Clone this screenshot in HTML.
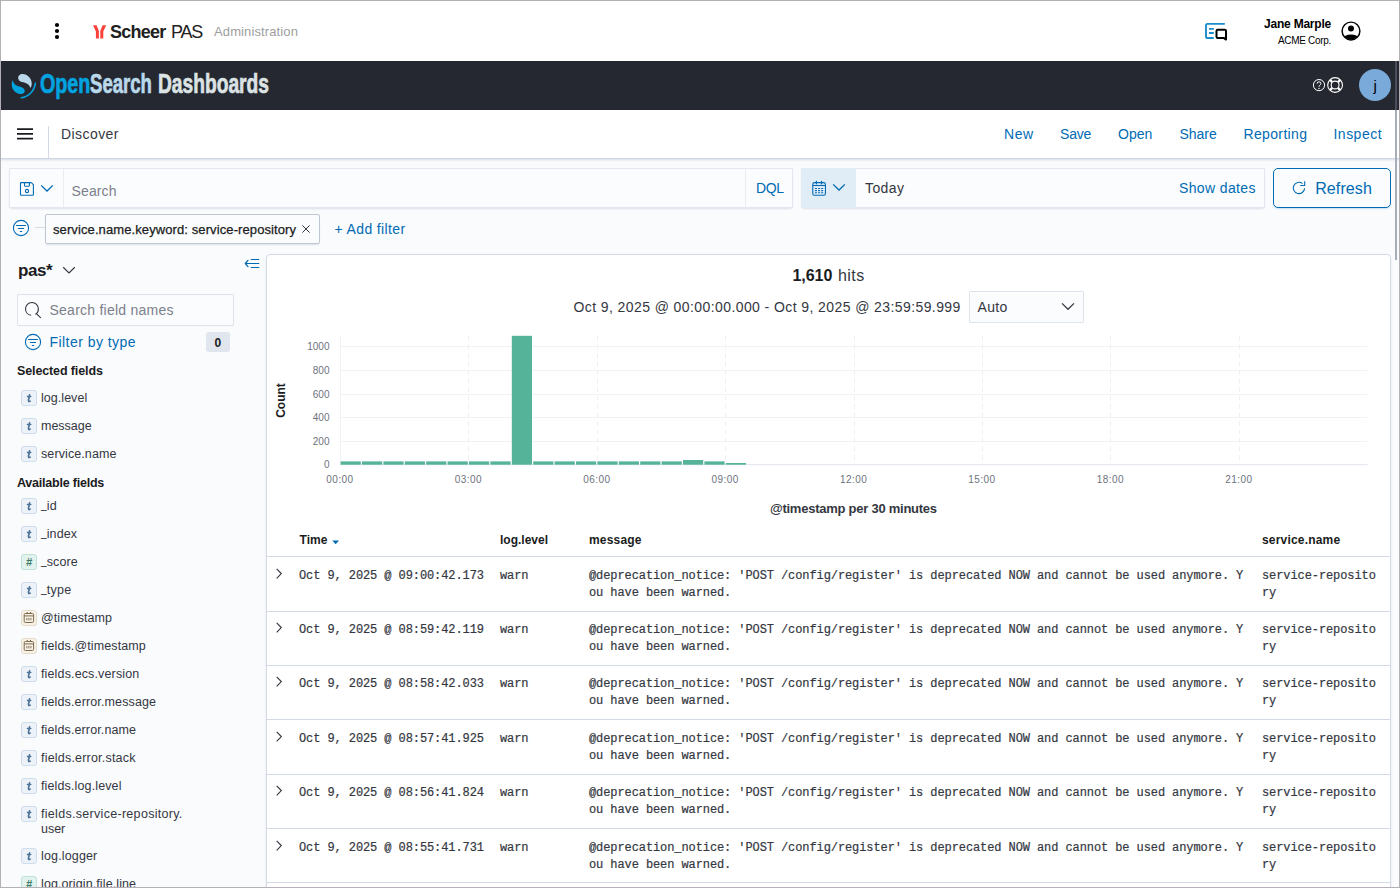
<!DOCTYPE html>
<html>
<head>
<meta charset="utf-8">
<title>Discover - OpenSearch Dashboards</title>
<style>
*{box-sizing:border-box;margin:0;padding:0}
html,body{width:1400px;height:888px;overflow:hidden;background:#fff}
body{position:relative;font-family:"Liberation Sans",sans-serif;color:#343741;font-size:14px}
.abs{position:absolute}
.t{position:absolute;white-space:nowrap;line-height:1}
.mono{font-family:"Liberation Mono",monospace}
.link{color:#006bb4}
#frame{position:absolute;left:0;top:0;width:1400px;height:888px;border:1px solid #b5b0b5;z-index:100;pointer-events:none}
/* top header */
#hdr{position:absolute;left:0;top:0;width:1400px;height:61px;background:#fff}
/* dark bar */
#osd{position:absolute;left:0;top:61px;width:1400px;height:49px;background:#252830}
/* nav */
#nav{position:absolute;left:0;top:110px;width:1400px;height:48px;background:#fff}
#bg{position:absolute;left:0;top:158px;width:1400px;height:730px;background:#fafbfd}
#navsh{position:absolute;left:0;top:158px;width:1400px;height:4px;background:linear-gradient(#d1d8e4 0,#d1d8e4 25%,#e2e6ee 25%,#e2e6ee 50%,#eff1f6 50%,#eff1f6 75%,#f6f8fb 75%,#f6f8fb 100%)}
</style>
</head>
<body>
<div id="hdr"></div>
<div id="osd"></div>
<div id="nav"></div>
<div id="bg"></div>
<div id="navsh"></div>

<!-- ===== top header ===== -->
<svg class="abs" style="left:53px;top:21px" width="8" height="20" viewBox="0 0 8 20"><circle cx="4" cy="4" r="2.1" fill="#000"/><circle cx="4" cy="10" r="2.1" fill="#000"/><circle cx="4" cy="16" r="2.1" fill="#000"/></svg>
<svg class="abs" style="left:93px;top:24.5px" width="14" height="14" viewBox="0 0 14 14"><path d="M0 0.3 L3.6 0.3 L5.9 6 L5.9 13.6 L2.9 13.6 L2.9 6.6 Z M13.2 0.3 L9.6 0.3 L7.3 6 L7.3 13.6 L10.3 13.6 L10.3 6.6 Z" fill="#f9423a"/></svg>
<span class="t" style="left:110px;top:23px;font-size:18px;font-weight:bold;color:#212121;letter-spacing:-0.77px">Scheer</span>
<span class="t" style="left:171px;top:23px;font-size:18px;color:#212121;letter-spacing:-1.16px">PAS</span>
<span class="t" style="left:214px;top:25px;font-size:13px;color:#9e9e9e;letter-spacing:0.12px">Administration</span>
<svg class="abs" style="left:1200px;top:18px" width="32" height="26" viewBox="1200 18 32 26"><path d="M1224.8 23.9 H1207.6 Q1206 23.9 1206 25.5 V36.4 Q1206 38 1207.6 38 H1213.8" fill="none" stroke="#1a8dcb" stroke-width="1.9"/><path d="M1209 28.9 H1213.8 M1209 33 H1213.8" stroke="#1a8dcb" stroke-width="1.8" fill="none"/><path d="M1217.7 29.8 H1224.8 Q1226 29.8 1226 31 V39.6 L1223.8 37.9 H1217.7 Q1216.5 37.9 1216.5 36.7 V31 Q1216.5 29.8 1217.7 29.8 Z" fill="#fff" stroke="#000" stroke-width="2" stroke-linejoin="round"/></svg>
<span class="t" style="right:69px;top:18px;font-size:12px;font-weight:bold;color:#000;letter-spacing:-0.22px">Jane Marple</span>
<span class="t" style="right:69px;top:36px;font-size:10px;color:#000;letter-spacing:-0.31px">ACME Corp.</span>
<svg class="abs" style="left:1340px;top:20px" width="22" height="22" viewBox="0 0 22 22"><defs><clipPath id="uc"><circle cx="11" cy="11" r="8.6"/></clipPath></defs><circle cx="11" cy="11" r="8.9" fill="#fff" stroke="#000" stroke-width="1.45"/><circle cx="11" cy="8.4" r="3" fill="#000"/><ellipse cx="11" cy="19" rx="7.8" ry="4.5" fill="#000" clip-path="url(#uc)"/></svg>

<!-- ===== OSD dark bar ===== -->
<svg class="abs" style="left:6px;top:68px" width="40" height="36" viewBox="6 68 40 36">
<path d="M18.2 78.6 C17.9 75.6 20.3 74 22.5 74.1 C27.6 74.3 31.6 78.6 31.7 83.2 C31.75 85.1 31.3 86.8 30.4 88.1 C29.6 85.4 28 83.8 25.4 83 C22.8 82.2 18.8 81.9 18.2 78.6 Z" fill="#b9d9eb"/>
<path d="M12.6 79.9 C11.1 83.5 11.4 87.6 13.8 90.6 C16 93.4 19.6 94.7 22.4 93.8 C24.3 93.2 25.1 91.5 24.6 89.9 C23.9 87.7 21 87 18.5 86.2 C15.5 85.2 13.3 83.5 12.6 79.9 Z" fill="#00a3e0"/>
<path d="M35.3 83.4 A16.4 16.4 0 0 1 21.3 97.8" fill="none" stroke="#00a3e0" stroke-width="1.6" stroke-linecap="round"/>
</svg>
<span class="t" style="left:40px;top:71.3px;font-size:27px;font-weight:bold;color:#00a3e0;-webkit-text-stroke:.7px #00a3e0;transform:scaleX(.730);transform-origin:0 0">Open</span>
<span class="t" style="left:90.4px;top:71.3px;font-size:27px;font-weight:bold;color:#b9d9eb;-webkit-text-stroke:.7px #b9d9eb;transform:scaleX(.688);transform-origin:0 0">Search</span>
<span class="t" style="left:158px;top:71.3px;font-size:27px;font-weight:bold;color:#dce3e4;-webkit-text-stroke:.7px #dce3e4;transform:scaleX(.711);transform-origin:0 0">Dashboards</span>
<svg class="abs" style="left:1311px;top:76px" width="34" height="18" viewBox="1311 76 34 18">
<circle cx="1319" cy="85.1" r="5.6" fill="none" stroke="#fff" stroke-width="1"/>
<path d="M1317.1 83.6 Q1317.1 81.8 1319 81.8 Q1320.9 81.8 1320.9 83.5 Q1320.9 84.6 1319.8 85.2 Q1319 85.7 1319 86.8" fill="none" stroke="#fff" stroke-width="1"/><circle cx="1319" cy="88.4" r=".7" fill="#fff"/>
<circle cx="1335.1" cy="85" r="7.4" fill="none" stroke="#fff" stroke-width="1.1"/>
<circle cx="1335.1" cy="85" r="3.9" fill="none" stroke="#fff" stroke-width="1.1"/>
<path d="M1332.2 82.1 L1330 79.9 M1338 82.1 L1340.2 79.9 M1332.2 87.9 L1330 90.1 M1338 87.9 L1340.2 90.1" stroke="#fff" stroke-width="2.3"/>
</svg>
<div class="abs" style="left:1359px;top:69px;width:32px;height:32px;border-radius:16px;background:#79aad9"></div>
<span class="t" style="left:1373.4px;top:78.3px;font-size:15px;color:#000">j</span>

<!-- ===== nav bar ===== -->
<svg class="abs" style="left:17px;top:128px" width="16" height="12" viewBox="0 0 16 12"><path d="M0 1.1 H16 M0 5.9 H16 M0 10.7 H16" stroke="#1a1c21" stroke-width="1.7"/></svg>
<div class="abs" style="left:48px;top:126px;width:1px;height:32px;background:#d3dae6"></div>
<span class="t" style="left:61px;top:127px;font-size:14px;color:#343741;letter-spacing:.43px">Discover</span>
<span class="t link" style="left:1004px;top:127px;font-size:14px;letter-spacing:.6px">New</span>
<span class="t link" style="left:1060px;top:127px;font-size:14px;letter-spacing:-.2px">Save</span>
<span class="t link" style="left:1118px;top:127px;font-size:14px;letter-spacing:0">Open</span>
<span class="t link" style="left:1179.5px;top:127px;font-size:14px;letter-spacing:-.04px">Share</span>
<span class="t link" style="left:1243.5px;top:127px;font-size:14px;letter-spacing:.35px">Reporting</span>
<span class="t link" style="left:1333.5px;top:127px;font-size:14px;letter-spacing:.48px">Inspect</span>

<!-- ===== query bar ===== -->
<div class="abs" style="left:9px;top:168px;width:784px;height:40px;background:#fbfcfd;border:1px solid #e3e7ef;box-shadow:0 1px 2px -1px rgba(152,162,179,.35),0 2px 3px -2px rgba(152,162,179,.3)"></div>
<div class="abs" style="left:63px;top:169px;width:1px;height:38px;background:#e9edf3"></div>
<div class="abs" style="left:745px;top:169px;width:1px;height:38px;background:#e9edf3"></div>
<svg class="abs" style="left:18px;top:180px" width="18" height="18" viewBox="18 180 18 18"><path d="M21.1 182.6 H30.9 Q31.3 182.6 31.6 182.9 L33.1 184.4 Q33.4 184.7 33.4 185.1 V194.7 Q33.4 195.3 32.8 195.3 H21.1 Q20.5 195.3 20.5 194.7 V183.2 Q20.5 182.6 21.1 182.6 Z" fill="none" stroke="#006bb4" stroke-width="1.1"/><path d="M24.5 182.7 V185.6 Q24.5 186.2 25.1 186.2 H28.8 Q29.4 186.2 29.4 185.6 V182.7" fill="none" stroke="#006bb4" stroke-width="1.1"/><circle cx="27" cy="191" r="1.65" fill="none" stroke="#006bb4" stroke-width="1.1"/></svg>
<svg class="abs" style="left:40px;top:184.4px" width="14" height="9" viewBox="0 0 14 9"><path d="M1.2 1.4 L7 7 L12.8 1.4" fill="none" stroke="#006bb4" stroke-width="1.3"/></svg>
<span class="t" style="left:71.5px;top:184px;font-size:14px;color:#7b808c;letter-spacing:.13px">Search</span>
<span class="t link" style="left:756px;top:181px;font-size:14px;letter-spacing:-.4px">DQL</span>

<div class="abs" style="left:801px;top:168px;width:464px;height:40px;background:#fbfcfd;border:1px solid #e3e7ef;box-shadow:0 1px 2px -1px rgba(152,162,179,.35),0 2px 3px -2px rgba(152,162,179,.3)"></div>
<div class="abs" style="left:801px;top:168px;width:55px;height:40px;background:#e0ecf6"></div>
<svg class="abs" style="left:810px;top:178px" width="18" height="20" viewBox="810 178 18 20"><rect x="812.75" y="182.6" width="12.7" height="12.7" rx="1.9" fill="none" stroke="#006bb4" stroke-width="1.1"/><path d="M812.8 185.5 H825.4" stroke="#006bb4" stroke-width="1.1"/><path d="M816.4 181.4 V183.8 M821.5 181.4 V183.8" stroke="#006bb4" stroke-width="1.3" stroke-linecap="round"/><rect x="814.9" y="188" width="2.1" height="1.05" rx=".3" fill="#006bb4"/><rect x="818" y="188" width="2.1" height="1.05" rx=".3" fill="#006bb4"/><rect x="821.1" y="188" width="2.1" height="1.05" rx=".3" fill="#006bb4"/><rect x="814.9" y="190.1" width="2.1" height="1.05" rx=".3" fill="#006bb4"/><rect x="818" y="190.1" width="2.1" height="1.05" rx=".3" fill="#006bb4"/><rect x="821.1" y="190.1" width="2.1" height="1.05" rx=".3" fill="#006bb4"/><rect x="814.9" y="192.2" width="2.1" height="1.05" rx=".3" fill="#006bb4"/><rect x="818" y="192.2" width="2.1" height="1.05" rx=".3" fill="#006bb4"/><rect x="821.1" y="192.2" width="2.1" height="1.05" rx=".3" fill="#006bb4"/></svg>
<svg class="abs" style="left:832px;top:183.2px" width="14" height="9" viewBox="0 0 14 9"><path d="M1.2 1.4 L7 7 L12.8 1.4" fill="none" stroke="#006bb4" stroke-width="1.3"/></svg>
<span class="t" style="left:865px;top:181px;font-size:14px;color:#343741;letter-spacing:.41px">Today</span>
<span class="t link" style="left:1179px;top:181px;font-size:14px;letter-spacing:.37px">Show dates</span>

<div class="abs" style="left:1273px;top:168px;width:118px;height:40px;background:#fbfcfd;border:1px solid #006bb4;border-radius:5px;box-shadow:0 2px 2px -1px rgba(0,107,180,.2)"></div>
<svg class="abs" style="left:1290px;top:178px" width="18" height="18" viewBox="1290 178 18 18"><path d="M1302.4 183.5 A5.65 5.65 0 1 0 1304.6 188.2" fill="none" stroke="#006bb4" stroke-width="1.1"/><path d="M1304.7 181.2 V185.5 H1300.3" fill="none" stroke="#006bb4" stroke-width="1.1"/></svg>
<span class="t link" style="left:1315.2px;top:181px;font-size:16px;letter-spacing:.1px">Refresh</span>

<!-- ===== filter row ===== -->
<svg class="abs" style="left:12px;top:219px" width="18" height="18" viewBox="0 0 18 18"><circle cx="9" cy="9" r="7.6" fill="none" stroke="#006bb4" stroke-width="1.1"/><path d="M4.5 6.5 H13.5 M6.4 9.5 H11.6 M8.3 12.5 H9.7" stroke="#006bb4" stroke-width="1.1" stroke-linecap="round"/></svg>
<div class="abs" style="left:35px;top:227px;width:10px;height:1px;background:#d3dae6"></div>
<div class="abs" style="left:45px;top:214px;width:275px;height:30px;background:#fbfcfd;border:1px solid #bfc6d3;border-radius:2px;box-shadow:0 2px 2px -1px rgba(152,162,179,.3)"></div>
<span class="t" style="left:53px;top:223px;font-size:13px;color:#1a1c21;letter-spacing:.1px;-webkit-text-stroke:.25px #1a1c21">service.name.keyword: service-repository</span>
<svg class="abs" style="left:301px;top:224px" width="10" height="10" viewBox="0 0 10 10"><path d="M1.4 1.4 L8.6 8.6 M8.6 1.4 L1.4 8.6" stroke="#343741" stroke-width="1"/></svg>
<span class="t link" style="left:334.5px;top:222px;font-size:14px;letter-spacing:.37px">+ Add filter</span>

<!-- ===== sidebar ===== -->

<style>.tok{position:absolute;left:21px;width:16px;height:16px;border-radius:3px;border:1px solid;text-align:center;font-family:"Liberation Serif",serif;font-size:12px;line-height:14px;overflow:hidden}.tk-t{background:#edf2f8;border-color:#cedceb;color:#47688c}.tk-t i{font-weight:bold;position:relative;top:-.5px}.tk-n{background:#e2f3ed;border-color:#bfe2d6;color:#3b7b68}.tk-n b{font-family:"Liberation Sans",sans-serif;font-size:11px;font-style:italic}.tk-d{background:#f7f1e6;border-color:#e6dccb}.us{display:inline-block;width:5.7px;position:relative;top:-2px;transform:scaleX(.8);transform-origin:0 50%;letter-spacing:0}.fn{position:absolute;left:41px;white-space:nowrap;font-size:12.5px;line-height:1;color:#343741}</style>
<span class="t" style="left:18px;top:262px;font-size:17px;font-weight:bold;color:#1a1c21;letter-spacing:-.44px">pas*</span>
<svg class="abs" style="left:62px;top:266px" width="14" height="9" viewBox="0 0 14 9"><path d="M1.2 1.3 L7 6.9 L12.8 1.3" fill="none" stroke="#343741" stroke-width="1.2"/></svg>
<svg class="abs" style="left:242px;top:256px" width="20" height="16" viewBox="242 256 20 16"><path d="M251.2 259.5 H258.8 M245.6 263.5 H258.8 M251.2 267.5 H258.8" stroke="#006bb4" stroke-width="1.1" fill="none" stroke-linecap="round"/><path d="M248 260.3 L245.3 263.5 L248 266.7" stroke="#006bb4" stroke-width="1.2" fill="none" stroke-linecap="round" stroke-linejoin="round"/></svg>
<div class="abs" style="left:17px;top:294px;width:217px;height:32px;background:#fbfcfd;border:1px solid #dde2eb;border-radius:1px;box-shadow:0 1px 1px -1px rgba(152,162,179,.2)"></div>
<svg class="abs" style="left:24px;top:301px" width="18" height="18" viewBox="0 0 18 18"><circle cx="7.95" cy="7.9" r="6.45" fill="none" stroke="#343741" stroke-width="1.1" stroke-dasharray="36.1 4.43" stroke-dashoffset="-10.7"/><path d="M12.3 12.6 L16.8 16.9" stroke="#343741" stroke-width="1.1"/></svg>
<span class="t" style="left:49.5px;top:303px;font-size:14px;color:#7b808c;letter-spacing:.24px">Search field names</span>
<svg class="abs" style="left:24px;top:333px" width="18" height="18" viewBox="0 0 18 18"><circle cx="9" cy="9" r="7.6" fill="none" stroke="#006bb4" stroke-width="1.1"/><path d="M4.5 6.5 H13.5 M6.4 9.5 H11.6 M8.3 12.5 H9.7" stroke="#006bb4" stroke-width="1.1" stroke-linecap="round"/></svg>
<span class="t link" style="left:49.5px;top:335px;font-size:14px;letter-spacing:.45px">Filter by type</span>
<div class="abs" style="left:206px;top:332px;width:24px;height:20px;background:#e0e5ee;border-radius:3px"></div>
<span class="t" style="left:214.5px;top:337px;font-size:12px;font-weight:bold;color:#1a1c21">0</span>
<span class="t" style="left:17px;top:365px;font-size:12.5px;font-weight:bold;color:#1a1c21;letter-spacing:-.12px">Selected fields</span>
<span class="t" style="left:17px;top:477px;font-size:12.5px;font-weight:bold;color:#1a1c21;letter-spacing:-.22px">Available fields</span>
<div class="tok tk-t" style="top:390px"><svg width="14" height="14" viewBox="0 0 14 14" style="position:absolute;left:0;top:0"><path d="M7.6 3.9 L6.5 9.2 Q6.25 10.5 7.4 10.4 L8.1 10.2" fill="none" stroke="#4b7399" stroke-width="1.65" stroke-linecap="round" stroke-linejoin="round"/><path d="M5.4 5.5 H8.8" stroke="#4b7399" stroke-width="1.35" stroke-linecap="round"/></svg></div>
<span class="fn" style="top:391.5px;letter-spacing:0.04px">log.level</span>
<div class="tok tk-t" style="top:418px"><svg width="14" height="14" viewBox="0 0 14 14" style="position:absolute;left:0;top:0"><path d="M7.6 3.9 L6.5 9.2 Q6.25 10.5 7.4 10.4 L8.1 10.2" fill="none" stroke="#4b7399" stroke-width="1.65" stroke-linecap="round" stroke-linejoin="round"/><path d="M5.4 5.5 H8.8" stroke="#4b7399" stroke-width="1.35" stroke-linecap="round"/></svg></div>
<span class="fn" style="top:419.5px;letter-spacing:-0.02px">message</span>
<div class="tok tk-t" style="top:446px"><svg width="14" height="14" viewBox="0 0 14 14" style="position:absolute;left:0;top:0"><path d="M7.6 3.9 L6.5 9.2 Q6.25 10.5 7.4 10.4 L8.1 10.2" fill="none" stroke="#4b7399" stroke-width="1.65" stroke-linecap="round" stroke-linejoin="round"/><path d="M5.4 5.5 H8.8" stroke="#4b7399" stroke-width="1.35" stroke-linecap="round"/></svg></div>
<span class="fn" style="top:447.5px;letter-spacing:0.1px">service.name</span>
<div class="tok tk-t" style="top:498px"><svg width="14" height="14" viewBox="0 0 14 14" style="position:absolute;left:0;top:0"><path d="M7.6 3.9 L6.5 9.2 Q6.25 10.5 7.4 10.4 L8.1 10.2" fill="none" stroke="#4b7399" stroke-width="1.65" stroke-linecap="round" stroke-linejoin="round"/><path d="M5.4 5.5 H8.8" stroke="#4b7399" stroke-width="1.35" stroke-linecap="round"/></svg></div>
<span class="fn" style="top:499.5px;letter-spacing:0.3px"><span class="us">_</span>id</span>
<div class="tok tk-t" style="top:526px"><svg width="14" height="14" viewBox="0 0 14 14" style="position:absolute;left:0;top:0"><path d="M7.6 3.9 L6.5 9.2 Q6.25 10.5 7.4 10.4 L8.1 10.2" fill="none" stroke="#4b7399" stroke-width="1.65" stroke-linecap="round" stroke-linejoin="round"/><path d="M5.4 5.5 H8.8" stroke="#4b7399" stroke-width="1.35" stroke-linecap="round"/></svg></div>
<span class="fn" style="top:527.5px;letter-spacing:0.13px"><span class="us">_</span>index</span>
<div class="tok tk-n" style="top:554px"><b>#</b></div>
<span class="fn" style="top:555.5px;letter-spacing:0.1px"><span class="us">_</span>score</span>
<div class="tok tk-t" style="top:582px"><svg width="14" height="14" viewBox="0 0 14 14" style="position:absolute;left:0;top:0"><path d="M7.6 3.9 L6.5 9.2 Q6.25 10.5 7.4 10.4 L8.1 10.2" fill="none" stroke="#4b7399" stroke-width="1.65" stroke-linecap="round" stroke-linejoin="round"/><path d="M5.4 5.5 H8.8" stroke="#4b7399" stroke-width="1.35" stroke-linecap="round"/></svg></div>
<span class="fn" style="top:583.5px;letter-spacing:0.3px"><span class="us">_</span>type</span>
<div class="tok tk-d" style="top:610px"><svg width="14" height="14" viewBox="0 0 14 14" style="position:absolute;left:0;top:0"><rect x="2.2" y="2.5" width="9.4" height="9" rx="1.2" fill="none" stroke="#7d6a4d" stroke-width="1"/><path d="M2.2 4.9 H11.6" stroke="#7d6a4d" stroke-width="1"/><path d="M5.2 1 V2.8 M8.5 1 V2.8" stroke="#7d6a4d" stroke-width="1.1"/><path d="M4.9 6.9 V9.4 M6.9 6.9 V9.4 M8.9 6.9 V9.4" stroke="#7d6a4d" stroke-width=".9"/></svg></div>
<span class="fn" style="top:611.5px;letter-spacing:0.07px">@timestamp</span>
<div class="tok tk-d" style="top:638px"><svg width="14" height="14" viewBox="0 0 14 14" style="position:absolute;left:0;top:0"><rect x="2.2" y="2.5" width="9.4" height="9" rx="1.2" fill="none" stroke="#7d6a4d" stroke-width="1"/><path d="M2.2 4.9 H11.6" stroke="#7d6a4d" stroke-width="1"/><path d="M5.2 1 V2.8 M8.5 1 V2.8" stroke="#7d6a4d" stroke-width="1.1"/><path d="M4.9 6.9 V9.4 M6.9 6.9 V9.4 M8.9 6.9 V9.4" stroke="#7d6a4d" stroke-width=".9"/></svg></div>
<span class="fn" style="top:639.5px;letter-spacing:0.11px">fields.@timestamp</span>
<div class="tok tk-t" style="top:666px"><svg width="14" height="14" viewBox="0 0 14 14" style="position:absolute;left:0;top:0"><path d="M7.6 3.9 L6.5 9.2 Q6.25 10.5 7.4 10.4 L8.1 10.2" fill="none" stroke="#4b7399" stroke-width="1.65" stroke-linecap="round" stroke-linejoin="round"/><path d="M5.4 5.5 H8.8" stroke="#4b7399" stroke-width="1.35" stroke-linecap="round"/></svg></div>
<span class="fn" style="top:667.5px;letter-spacing:0.14px">fields.ecs.version</span>
<div class="tok tk-t" style="top:694px"><svg width="14" height="14" viewBox="0 0 14 14" style="position:absolute;left:0;top:0"><path d="M7.6 3.9 L6.5 9.2 Q6.25 10.5 7.4 10.4 L8.1 10.2" fill="none" stroke="#4b7399" stroke-width="1.65" stroke-linecap="round" stroke-linejoin="round"/><path d="M5.4 5.5 H8.8" stroke="#4b7399" stroke-width="1.35" stroke-linecap="round"/></svg></div>
<span class="fn" style="top:695.5px;letter-spacing:0.13px">fields.error.message</span>
<div class="tok tk-t" style="top:722px"><svg width="14" height="14" viewBox="0 0 14 14" style="position:absolute;left:0;top:0"><path d="M7.6 3.9 L6.5 9.2 Q6.25 10.5 7.4 10.4 L8.1 10.2" fill="none" stroke="#4b7399" stroke-width="1.65" stroke-linecap="round" stroke-linejoin="round"/><path d="M5.4 5.5 H8.8" stroke="#4b7399" stroke-width="1.35" stroke-linecap="round"/></svg></div>
<span class="fn" style="top:723.5px;letter-spacing:0.12px">fields.error.name</span>
<div class="tok tk-t" style="top:750px"><svg width="14" height="14" viewBox="0 0 14 14" style="position:absolute;left:0;top:0"><path d="M7.6 3.9 L6.5 9.2 Q6.25 10.5 7.4 10.4 L8.1 10.2" fill="none" stroke="#4b7399" stroke-width="1.65" stroke-linecap="round" stroke-linejoin="round"/><path d="M5.4 5.5 H8.8" stroke="#4b7399" stroke-width="1.35" stroke-linecap="round"/></svg></div>
<span class="fn" style="top:751.5px;letter-spacing:0.2px">fields.error.stack</span>
<div class="tok tk-t" style="top:778px"><svg width="14" height="14" viewBox="0 0 14 14" style="position:absolute;left:0;top:0"><path d="M7.6 3.9 L6.5 9.2 Q6.25 10.5 7.4 10.4 L8.1 10.2" fill="none" stroke="#4b7399" stroke-width="1.65" stroke-linecap="round" stroke-linejoin="round"/><path d="M5.4 5.5 H8.8" stroke="#4b7399" stroke-width="1.35" stroke-linecap="round"/></svg></div>
<span class="fn" style="top:779.5px;letter-spacing:0.13px">fields.log.level</span>
<div class="tok tk-t" style="top:806px"><svg width="14" height="14" viewBox="0 0 14 14" style="position:absolute;left:0;top:0"><path d="M7.6 3.9 L6.5 9.2 Q6.25 10.5 7.4 10.4 L8.1 10.2" fill="none" stroke="#4b7399" stroke-width="1.65" stroke-linecap="round" stroke-linejoin="round"/><path d="M5.4 5.5 H8.8" stroke="#4b7399" stroke-width="1.35" stroke-linecap="round"/></svg></div>
<span class="fn" style="top:807.5px;letter-spacing:0.3px">fields.service-repository.</span>
<div class="tok tk-t" style="top:848px"><svg width="14" height="14" viewBox="0 0 14 14" style="position:absolute;left:0;top:0"><path d="M7.6 3.9 L6.5 9.2 Q6.25 10.5 7.4 10.4 L8.1 10.2" fill="none" stroke="#4b7399" stroke-width="1.65" stroke-linecap="round" stroke-linejoin="round"/><path d="M5.4 5.5 H8.8" stroke="#4b7399" stroke-width="1.35" stroke-linecap="round"/></svg></div>
<span class="fn" style="top:849.5px;letter-spacing:0.15px">log.logger</span>
<div class="tok tk-n" style="top:876px"><b>#</b></div>
<span class="fn" style="top:877.5px;letter-spacing:0.1px">log.origin.file.line</span>
<span class="fn" style="top:823px;letter-spacing:-.03px">user</span>

<!-- ===== main panel ===== -->
<div class="abs" style="left:266px;top:254px;width:1125px;height:660px;background:#fff;border:1px solid #d3dae6;border-radius:4px;box-shadow:0 2px 2px -1px rgba(152,162,179,.3),0 1px 5px -2px rgba(152,162,179,.3)"></div>
<span class="t" style="left:792.5px;top:268px;font-size:16px;font-weight:bold;color:#1a1c21;letter-spacing:-.05px">1,610</span>
<span class="t" style="left:838px;top:268px;font-size:16px;color:#343741;letter-spacing:.46px">hits</span>
<span class="t" style="left:573.5px;top:300px;font-size:14px;color:#343741;letter-spacing:.41px">Oct 9, 2025 @ 00:00:00.000 - Oct 9, 2025 @ 23:59:59.999</span>
<div class="abs" style="left:969px;top:291px;width:115px;height:32px;background:#fbfcfd;border:1px solid #dde2eb;border-radius:1px"></div>
<span class="t" style="left:977.5px;top:300px;font-size:14px;color:#343741;letter-spacing:.3px">Auto</span>
<svg class="abs" style="left:1061px;top:302px" width="14" height="9" viewBox="0 0 14 9"><path d="M1 1.4 L7 7.3 L13 1.4" fill="none" stroke="#343741" stroke-width="1.2"/></svg>
<svg class="abs" style="left:268px;top:330px" width="1120" height="190" viewBox="268 330 1120 190" font-family="Liberation Sans, sans-serif"><path d="M340 346.5 H1367.5" stroke="#f0f2f5" stroke-width="1"/><path d="M340 370.5 H1367.5" stroke="#f0f2f5" stroke-width="1"/><path d="M340 394.5 H1367.5" stroke="#f0f2f5" stroke-width="1"/><path d="M340 417.5 H1367.5" stroke="#f0f2f5" stroke-width="1"/><path d="M340 441.5 H1367.5" stroke="#f0f2f5" stroke-width="1"/><path d="M468.5 336 V464" stroke="#eef0f4" stroke-width="1" stroke-dasharray="5 3.5"/><path d="M597.5 336 V464" stroke="#eef0f4" stroke-width="1" stroke-dasharray="5 3.5"/><path d="M725.5 336 V464" stroke="#eef0f4" stroke-width="1" stroke-dasharray="5 3.5"/><path d="M854.5 336 V464" stroke="#eef0f4" stroke-width="1" stroke-dasharray="5 3.5"/><path d="M982.5 336 V464" stroke="#eef0f4" stroke-width="1" stroke-dasharray="5 3.5"/><path d="M1110.5 336 V464" stroke="#eef0f4" stroke-width="1" stroke-dasharray="5 3.5"/><path d="M1239.5 336 V464" stroke="#eef0f4" stroke-width="1" stroke-dasharray="5 3.5"/><path d="M340.5 336 V465" stroke="#f0f2f5" stroke-width="1"/><path d="M340 464.7 H1367.5" stroke="#e6e9ef" stroke-width="1.2"/><rect x="340.6" y="461.4" width="20.2" height="3.3" fill="#54b399"/><rect x="362.0" y="461.4" width="20.2" height="3.3" fill="#54b399"/><rect x="383.4" y="461.4" width="20.2" height="3.3" fill="#54b399"/><rect x="404.8" y="461.4" width="20.2" height="3.3" fill="#54b399"/><rect x="426.2" y="461.4" width="20.2" height="3.3" fill="#54b399"/><rect x="447.6" y="461.4" width="20.2" height="3.3" fill="#54b399"/><rect x="469.0" y="461.4" width="20.2" height="3.3" fill="#54b399"/><rect x="490.4" y="461.4" width="20.2" height="3.3" fill="#54b399"/><rect x="511.8" y="335.8" width="20.2" height="128.9" fill="#54b399"/><rect x="533.2" y="461.4" width="20.2" height="3.3" fill="#54b399"/><rect x="554.6" y="461.4" width="20.2" height="3.3" fill="#54b399"/><rect x="576.0" y="461.4" width="20.2" height="3.3" fill="#54b399"/><rect x="597.4" y="461.4" width="20.2" height="3.3" fill="#54b399"/><rect x="618.8" y="461.4" width="20.2" height="3.3" fill="#54b399"/><rect x="640.2" y="461.4" width="20.2" height="3.3" fill="#54b399"/><rect x="661.6" y="461.4" width="20.2" height="3.3" fill="#54b399"/><rect x="683.0" y="460" width="20.2" height="4.7" fill="#54b399"/><rect x="704.4" y="461.4" width="20.2" height="3.3" fill="#54b399"/><rect x="725.8" y="463" width="20.2" height="1.7" fill="#54b399"/><text x="329.5" y="350.1" font-size="10" fill="#6d727e" text-anchor="end">1000</text><text x="329.5" y="374.1" font-size="10" fill="#6d727e" text-anchor="end">800</text><text x="329.5" y="398.1" font-size="10" fill="#6d727e" text-anchor="end">600</text><text x="329.5" y="421.1" font-size="10" fill="#6d727e" text-anchor="end">400</text><text x="329.5" y="445.1" font-size="10" fill="#6d727e" text-anchor="end">200</text><text x="329.5" y="468.3" font-size="10" fill="#6d727e" text-anchor="end">0</text><text x="340.0" y="483" font-size="10" fill="#6d727e" text-anchor="middle" letter-spacing=".45">00:00</text><text x="468.4" y="483" font-size="10" fill="#6d727e" text-anchor="middle" letter-spacing=".45">03:00</text><text x="596.8" y="483" font-size="10" fill="#6d727e" text-anchor="middle" letter-spacing=".45">06:00</text><text x="725.2" y="483" font-size="10" fill="#6d727e" text-anchor="middle" letter-spacing=".45">09:00</text><text x="853.6" y="483" font-size="10" fill="#6d727e" text-anchor="middle" letter-spacing=".45">12:00</text><text x="982.0" y="483" font-size="10" fill="#6d727e" text-anchor="middle" letter-spacing=".45">15:00</text><text x="1110.4" y="483" font-size="10" fill="#6d727e" text-anchor="middle" letter-spacing=".45">18:00</text><text x="1238.8" y="483" font-size="10" fill="#6d727e" text-anchor="middle" letter-spacing=".45">21:00</text><text transform="translate(285.4 400.5) rotate(-90)" font-size="12" font-weight="bold" fill="#1a1c21" text-anchor="middle">Count</text></svg>
<span class="t" style="left:770px;top:502px;font-size:13px;font-weight:bold;color:#343741;letter-spacing:-.25px">@timestamp per 30 minutes</span>
<span class="t" style="left:299.5px;top:534px;font-size:12px;font-weight:bold;color:#1a1c21;letter-spacing:.07px">Time</span>
<svg class="abs" style="left:332px;top:540px" width="8" height="5" viewBox="0 0 8 5"><path d="M.3 .6 H7 L3.65 4.3 Z" fill="#006bb4"/></svg>
<span class="t" style="left:500px;top:534px;font-size:12px;font-weight:bold;color:#1a1c21">log.level</span>
<span class="t" style="left:589px;top:534px;font-size:12px;font-weight:bold;color:#1a1c21;letter-spacing:.19px">message</span>
<span class="t" style="left:1262px;top:534px;font-size:12px;font-weight:bold;color:#1a1c21;letter-spacing:.19px">service.name</span>
<style>.hr{position:absolute;left:267px;width:1123px;height:1px;background:#d3dae6}.c{position:absolute;white-space:pre;font-family:"Liberation Mono",monospace;font-size:12px;line-height:17px;color:#343741;letter-spacing:-.09px;-webkit-text-stroke:.2px #343741}</style>
<div class="hr" style="top:556px"></div>
<div class="hr" style="top:611px"></div>
<div class="hr" style="top:665px"></div>
<div class="hr" style="top:719px"></div>
<div class="hr" style="top:774px"></div>
<div class="hr" style="top:828px"></div>
<div class="hr" style="top:882px"></div>
<svg class="abs" style="left:275px;top:567.5px" width="8" height="11" viewBox="0 0 8 11"><path d="M1.7 .9 L6.3 5.6 L1.7 10.3" fill="none" stroke="#343741" stroke-width="1.15"/></svg>
<span class="c" style="left:299px;top:568px">Oct 9, 2025 @ 09:00:42.173</span>
<span class="c" style="left:500px;top:568px">warn</span>
<span class="c" style="left:589px;top:568px">@deprecation_notice: 'POST /config/register' is deprecated NOW and cannot be used anymore. Y
ou have been warned.</span>
<span class="c" style="left:1262px;top:568px">service-reposito
ry</span>
<svg class="abs" style="left:275px;top:621.5px" width="8" height="11" viewBox="0 0 8 11"><path d="M1.7 .9 L6.3 5.6 L1.7 10.3" fill="none" stroke="#343741" stroke-width="1.15"/></svg>
<span class="c" style="left:299px;top:622px">Oct 9, 2025 @ 08:59:42.119</span>
<span class="c" style="left:500px;top:622px">warn</span>
<span class="c" style="left:589px;top:622px">@deprecation_notice: 'POST /config/register' is deprecated NOW and cannot be used anymore. Y
ou have been warned.</span>
<span class="c" style="left:1262px;top:622px">service-reposito
ry</span>
<svg class="abs" style="left:275px;top:675.5px" width="8" height="11" viewBox="0 0 8 11"><path d="M1.7 .9 L6.3 5.6 L1.7 10.3" fill="none" stroke="#343741" stroke-width="1.15"/></svg>
<span class="c" style="left:299px;top:676px">Oct 9, 2025 @ 08:58:42.033</span>
<span class="c" style="left:500px;top:676px">warn</span>
<span class="c" style="left:589px;top:676px">@deprecation_notice: 'POST /config/register' is deprecated NOW and cannot be used anymore. Y
ou have been warned.</span>
<span class="c" style="left:1262px;top:676px">service-reposito
ry</span>
<svg class="abs" style="left:275px;top:730.5px" width="8" height="11" viewBox="0 0 8 11"><path d="M1.7 .9 L6.3 5.6 L1.7 10.3" fill="none" stroke="#343741" stroke-width="1.15"/></svg>
<span class="c" style="left:299px;top:731px">Oct 9, 2025 @ 08:57:41.925</span>
<span class="c" style="left:500px;top:731px">warn</span>
<span class="c" style="left:589px;top:731px">@deprecation_notice: 'POST /config/register' is deprecated NOW and cannot be used anymore. Y
ou have been warned.</span>
<span class="c" style="left:1262px;top:731px">service-reposito
ry</span>
<svg class="abs" style="left:275px;top:784.5px" width="8" height="11" viewBox="0 0 8 11"><path d="M1.7 .9 L6.3 5.6 L1.7 10.3" fill="none" stroke="#343741" stroke-width="1.15"/></svg>
<span class="c" style="left:299px;top:785px">Oct 9, 2025 @ 08:56:41.824</span>
<span class="c" style="left:500px;top:785px">warn</span>
<span class="c" style="left:589px;top:785px">@deprecation_notice: 'POST /config/register' is deprecated NOW and cannot be used anymore. Y
ou have been warned.</span>
<span class="c" style="left:1262px;top:785px">service-reposito
ry</span>
<svg class="abs" style="left:275px;top:839.5px" width="8" height="11" viewBox="0 0 8 11"><path d="M1.7 .9 L6.3 5.6 L1.7 10.3" fill="none" stroke="#343741" stroke-width="1.15"/></svg>
<span class="c" style="left:299px;top:840px">Oct 9, 2025 @ 08:55:41.731</span>
<span class="c" style="left:500px;top:840px">warn</span>
<span class="c" style="left:589px;top:840px">@deprecation_notice: 'POST /config/register' is deprecated NOW and cannot be used anymore. Y
ou have been warned.</span>
<span class="c" style="left:1262px;top:840px">service-reposito
ry</span>
<div class="abs" style="left:1395px;top:61px;width:2px;height:49px;background:#4b4e58"></div>
<div class="abs" style="left:1395px;top:110px;width:2px;height:150px;background:#a9adb7"></div>
<!--SECTIONS-->
<div id="frame"></div>
</body>
</html>
